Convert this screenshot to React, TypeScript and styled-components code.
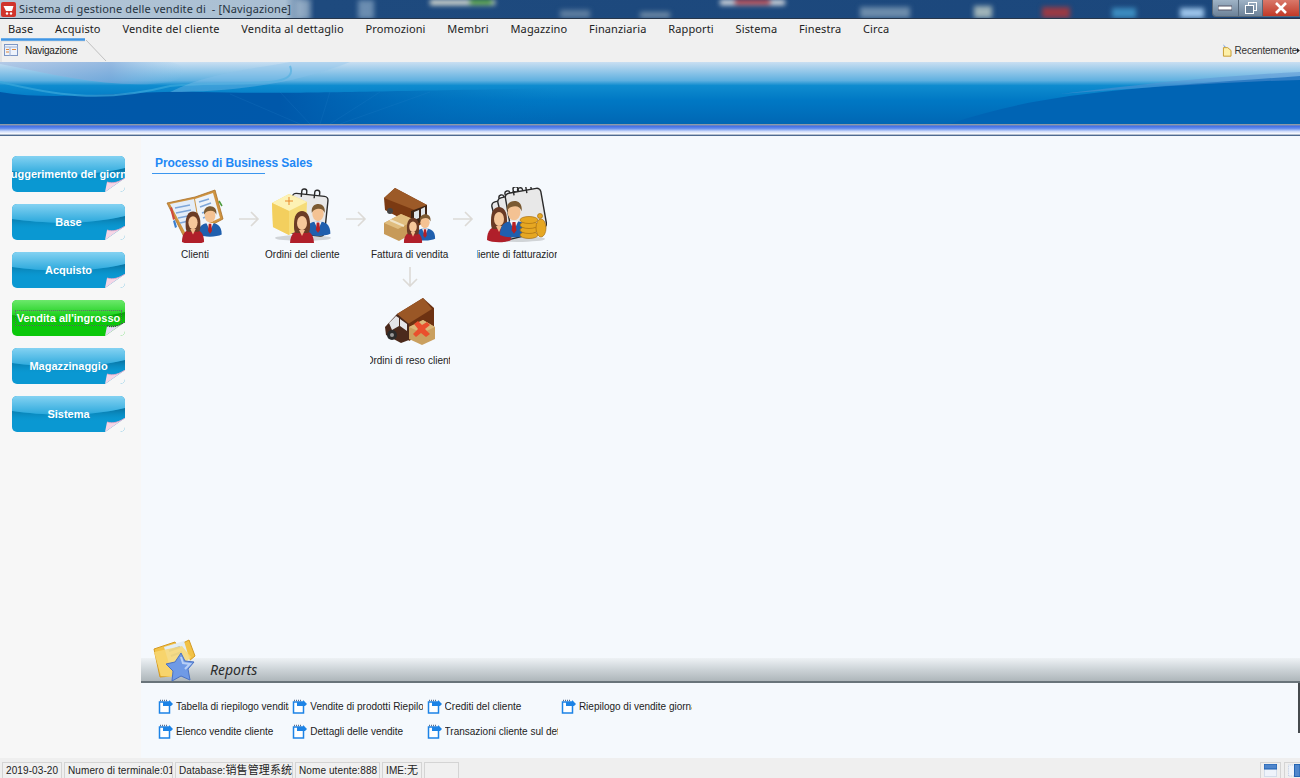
import React from "react";
import styled, { createGlobalStyle } from "styled-components";

const UI = `"Noto Sans", "Noto Sans CJK SC", sans-serif`;
const SMALL = `"Liberation Sans", "Noto Sans CJK SC", sans-serif`;

const Global = createGlobalStyle`
  html, body { margin: 0; padding: 0; height: 100%; overflow: hidden; background: #f5f9fd; }
  #root { height: 100%; }
  * { box-sizing: border-box; }
`;

const Page = styled.div`
  width: 1300px; height: 778px; display: flex; flex-direction: column; overflow: hidden;
  font-family: ${UI}; color: #222; position: relative;
`;

const TitleBar = styled.div`
  height: 19px; flex: none; position: relative; display: flex; align-items: center; gap: 3px;
  padding-left: 1px; overflow: hidden; background: linear-gradient(90deg,#b4c6d6 0,#a9bfd3 285px,#1e4a7e 315px,#1b477c 100%);
  border-bottom: 1px solid #27364a;
`;
const DesktopBlobs = styled.svg`
  position: absolute; left: 0; top: 0; filter: blur(2.500px);
`;
const TitleText = styled.span`
  position: relative; font-size: 11px; line-height: 18px; color: #26333f; white-space: pre; letter-spacing: .13px;
`;
const WinControls = styled.div`
  position: absolute; right: 0; top: 0; height: 17px; width: 88px; display: flex;
  border: 1px solid #5a6a7a; border-top: none; border-right: none; border-radius: 0 0 0 4px; overflow: hidden;
`;
const WinBtn = styled.div<{ $red?: boolean; $w: number }>`
  width: ${p => p.$w}px; display: flex; align-items: center; justify-content: center;
  background: ${p => p.$red ? "linear-gradient(#d9786a,#c03a28)" : "linear-gradient(#9fb3c6,#6d8298)"};
  border-right: 1px solid #55677a;
`;

const MenuBar = styled.nav`
  height: 19px; flex: none; display: flex; gap: 21.800px; padding-left: 8px; background: #f0f0f0; align-items: center;
`;
const MenuItem = styled.span`
  font-size: 11px; line-height: 19px; color: #222; white-space: nowrap; letter-spacing: .12px;
`;

const TabRow = styled.div`
  height: 24px; flex: none; background: #f0f0f0; display: flex; justify-content: space-between; position: relative;
`;
const Tab = styled.div`
  width: 106px; height: 24px; display: flex; align-items: center; gap: 7px; padding: 0 0 0 4px;
  position: relative; font-family: ${SMALL}; font-size: 10px; letter-spacing: -.25px; color: #222;
`;
const TabOutline = styled.svg`
  position: absolute; left: 0; top: 0;
`;
const Recent = styled.div`
  display: flex; align-items: center; gap: 2px; padding: 0; width: 78px; font-family: ${SMALL}; font-size: 10px; letter-spacing: -.2px; color: #333; white-space: nowrap;
`;

const Banner = styled.svg`
  display: block; flex: none; width: 1300px; height: 62px;
`;
const Strip = styled.div`
  height: 12px; flex: none;
  background: linear-gradient(#8e9aa8 0,#8e9aa8 8%,#3f6de6 16%,#5f8aec 36%,#cfdcfa 62%,#ffffff 84%,#4e6a90 92%,#4e6a90 100%);
`;

const Body = styled.div`
  flex: 1; min-height: 0; display: flex;
`;
const Sidebar = styled.aside`
  width: 141px; flex: none; background: #f7f7f7; padding: 20px 0 0 12px; display: flex; flex-direction: column; gap: 12px;
`;
const SideButton = styled.div<{ $green?: boolean }>`
  width: 113px; height: 36px; position: relative; border-radius: 5px; overflow: hidden;
  display: flex; align-items: center; justify-content: center;
  background: ${p => p.$green ? "#0bc80b" : "#0a98d2"};
`;
const Gloss = styled.svg`
  position: absolute; left: 0; top: 0;
`;
const SideLabel = styled.span<{ $dotted?: boolean }>`
  position: relative; font-size: 11px; font-weight: 700; color: #fff; white-space: nowrap; line-height: 14px;
  font-family: ${SMALL};
  ${p => p.$dotted ? "outline: 1px dotted rgba(120,60,130,.7); padding: 0 1px;" : ""}
`;
const Fold = styled.svg`
  position: absolute; right: 0; bottom: 0;
`;

const Content = styled.main`
  flex: 1; min-width: 0; background: #f5f9fd; display: flex; flex-direction: column;
`;
const Process = styled.section`
  flex: 1; padding: 20px 0 0 11px;
`;
const ProcessTitle = styled.h2`
  margin: 0; width: 113px; height: 18px; border-bottom: 1px solid #3a96ef; padding-left: 3px;
  font-size: 12px; line-height: 14px; font-weight: 700; color: #1e88f5; white-space: nowrap; letter-spacing: -.08px;
  font-family: ${SMALL};
`;
const Flow = styled.div`
  display: grid; grid-template-columns: 80px 27.300px 80px 27.300px 80px 27.300px 80px; grid-template-rows: 76px 30px 78px;
  margin: 12px 0 0 3px; justify-items: center;
`;
const Node = styled.div<{ $col: number; $row: number }>`
  grid-column: ${p => p.$col}; grid-row: ${p => p.$row}; width: 80px; display: flex; flex-direction: column; align-items: center;
`;
const NodeIcon = styled.div`
  height: 58px; display: flex; align-items: center; justify-content: center;
`;
const NodeLabel = styled.div`
  width: 80px; margin-top: 4px; display: flex; justify-content: center; overflow: hidden; white-space: nowrap;
  font-family: ${SMALL}; font-size: 10px; line-height: 14px; color: #222;
`;
const FlowArrow = styled.svg<{ $col: number; $row: number }>`
  grid-column: ${p => p.$col}; grid-row: ${p => p.$row}; align-self: ${p => p.$row === 1 ? "start" : "center"};
  margin-top: ${p => p.$row === 1 ? "25px" : "0"}; overflow: visible;
`;

const Reports = styled.section`
  flex: none; position: relative;
`;
const ReportsHeader = styled.div`
  height: 25px; display: flex; align-items: center; padding: 0 0 2px 69px;
  background: linear-gradient(#eef2f5,#cdd4d8 45%,#aeb6ba 92%,#69747a 92%);
  font-family: ${UI}; font-size: 14px; font-style: italic; color: #2c2c2c;
`;
const FolderIcon = styled.svg`
  position: absolute; left: 12px; top: -19px;
`;
const ReportsGrid = styled.div`
  height: 75px; display: grid; grid-template-columns: repeat(4, 134.300px); grid-auto-rows: 25px; padding: 11px 0 0 17px;
  position: relative;
`;
const RightEdge = styled.div`
  position: absolute; right: 0; top: 0; width: 2px; height: 50px; background: #454a4e;
`;
const ReportLink = styled.div`
  display: flex; align-items: center; gap: 3px; font-family: ${SMALL}; font-size: 10px; color: #222; white-space: nowrap; min-width: 0;
`;
const ReportText = styled.span`
  width: 113px; overflow: hidden; display: block;
`;

const StatusBar = styled.footer`
  height: 20px; flex: none; background: #efefef; display: flex; align-items: flex-end; gap: 2px; padding-left: 2px; position: relative;
`;
const StatusCell = styled.div<{ $w: number }>`
  width: ${p => p.$w}px; height: 16px; border: 1px solid #d4d4d4; border-bottom: none; font-family: ${SMALL}; font-size: 10px; line-height: 15px; color: #222;
  padding-left: 3px; white-space: nowrap; overflow: hidden; background: #f0f0f0; letter-spacing: .1px;
`;
const Cjk = styled.span`
  font-size: 11px;
`;
const StatusIcons = styled.div`
  margin-left: auto; display: flex; gap: 3px; height: 16px;
`;
const LayoutBtn = styled.div`
  width: 21px; height: 16px; border: 1px solid #d4d4d4; border-bottom: none; display: flex; align-items: center; justify-content: center; flex: none;
`;
const LayoutBtnCut = styled(LayoutBtn)`
  width: 16px; border-right: none; justify-content: flex-start; padding-left: 3px;
`;

const Woman = ({ x, y, s = 1 }: { x: number; y: number; s?: number }) => (
  <g transform={`translate(${x} ${y}) scale(${s})`}>
    <path d="M-12 26c0-10 5-14 12-14s12 4 12 14c-5 3-19 3-24 0z" fill="#b01f2a" />
    <path d="M-8 6c0-8 3-13 8-13s8 5 8 13c0 5 0 8-2 9H-6c-2-1-2-4-2-9z" fill="#6b3b25" />
    <ellipse cx="0" cy="5" rx="5" ry="7" fill="#f6c79a" />
    <path d="M-3 12h6l-3 6z" fill="#f2bb8c" />
  </g>
);
const Man = ({ x, y, s = 1 }: { x: number; y: number; s?: number }) => (
  <g transform={`translate(${x} ${y}) scale(${s})`}>
    <path d="M-13 24c0-10 5-13 13-13s13 3 13 13c-6 3-20 3-26 0z" fill="#1f5fae" />
    <path d="M-4 11h8l-4 9z" fill="#f4f4f4" />
    <path d="M-1.400 12h2.800l.8 8-2.200 3-2.200-3z" fill="#b52025" />
    <ellipse cx="0" cy="3" rx="6" ry="7.500" fill="#f4c293" />
    <path d="M-6.500 2c-1-7 3-9.500 7-9.500s7.500 3 6.500 9.500c-1-3-3-4.500-6-4.500s-6 1-7.500 4.500z" fill="#7b5a32" />
  </g>
);
const Shadow = ({ cx, cy, rx }: { cx: number; cy: number; rx: number }) => (
  <ellipse cx={cx} cy={cy} rx={rx} ry="3" fill="#000" opacity=".15" />
);
const Calendar = ({ x, y, r = 8 }: { x: number; y: number; r?: number }) => (
  <g transform={`translate(${x} ${y}) rotate(${r})`}>
    <rect x="0" y="4" width="36" height="40" rx="4" fill="#e8e8e8" stroke="#2a2a2a" strokeWidth="1.400" />
    <path d="M9 7V1c0-3 5-3 5 0v3M22 7V1c0-3 5-3 5 0v3" fill="none" stroke="#2a2a2a" strokeWidth="1.400" />
  </g>
);

const IconClienti = () => (
  <svg width="58" height="56" viewBox="0 0 58 56">
    <path d="M1 16L29 10 49 3l8 29-38 20z" fill="#cf9440" stroke="#a9702a" strokeWidth=".8" />
    <path d="M4 17L28 12l5 28-13 7z" fill="#e4edf8" />
    <path d="M29 12L47 6l7 25-20 9z" fill="#eef3f9" />
    <path d="M9 21l15-3M10 26l15-3M12 31l15-3M14 36l13-3" stroke="#7ea6d8" strokeWidth="1.500" />
    <path d="M33 15l10-3M34 20l11-4M36 26l11-4M37 31l11-4" stroke="#7ea6d8" strokeWidth="1.500" />
    <path d="M6 20l-2 1 3 12 2-1z" fill="#cf4a3c" /><path d="M9 33l-2 1 2 7 2-1z" fill="#3a7fd0" />
    <path d="M53 14l3 5" stroke="#4a9a3a" strokeWidth="1.500" />
    <Man x={44} y={26} s={.9} />
    <Woman x={27} y={31} s={.92} />
  </svg>
);
const IconOrdini = () => (
  <svg width="62" height="56" viewBox="0 0 62 56">
    <Shadow cx={32} cy={51} rx={28} />
    <Calendar x={22} y={2} r={6} />
    <path d="M1 16L18 7l18 8-1 24-17 9-16-8z" fill="#f6dc78" />
    <path d="M1 16l17 8 18-9-18-8z" fill="#fdf2b4" />
    <path d="M18 24v24L2 40 1 16z" fill="#f3cf5e" />
    <path d="M14 14h8M18 10v8" stroke="#e8892a" strokeWidth="1" />
    <Man x={47} y={24} s={.95} />
    <Woman x={31} y={31} s={1} />
  </svg>
);
const IconFattura = () => (
  <svg width="54" height="56" viewBox="0 0 54 56">
    <path d="M1 11L12 1l32 17v15l-10 7L2 23z" fill="#7b3a12" />
    <path d="M1 11L12 1l32 17-10 6z" fill="#9c5a28" />
    <path d="M28 24l16-6v14l-16 8z" fill="#3d2415" />
    <path d="M31 25l5-2v8l-5 2zM38 22l4-2v8l-4 2z" fill="#dfe5ea" />
    <circle cx="7" cy="24" r="3" fill="#444" />
    <path d="M1 36l17-9 14 6v12l-16 9-15-7z" fill="#c79a58" />
    <path d="M1 36l17-9 14 6-17 9z" fill="#e0bd7e" />
    <path d="M7 33l14 6" stroke="#f0e4c8" strokeWidth="2" />
    <Man x={42} y={33} s={.78} />
    <Woman x={30} y={36} s={.76} />
  </svg>
);
const IconFatturazione = () => (
  <svg width="60" height="56" viewBox="0 0 60 56">
    <Calendar x={3} y={12} r={-14} />
    <Calendar x={9} y={8} r={-14} />
    <Calendar x={17} y={3} r={-10} />
    <Shadow cx={30} cy={52} rx={28} />
    <Woman x={12} y={27} s={1} />
    <Man x={27} y={22} s={1.080} />
    <g fill="#e6a722" stroke="#a86f10" strokeWidth=".7">
      <ellipse cx="42" cy="48" rx="9" ry="3.500" />
      <ellipse cx="42" cy="43" rx="9" ry="3.500" />
      <ellipse cx="42" cy="38" rx="9" ry="3.500" />
      <ellipse cx="42" cy="33" rx="9" ry="3.500" />
      <ellipse cx="54" cy="41" rx="5" ry="9" />
      <circle cx="53" cy="29" r="2.500" />
    </g>
  </svg>
);
const IconReso = () => (
  <svg width="50" height="48" viewBox="0 0 50 48">
    <path d="M12 17L38 1l11 10v19L24 44z" fill="#6d3212" />
    <path d="M12 17L38 1l9 11-24 15z" fill="#9a5726" />
    <path d="M0 30l12-13 12 10v16l-8 3-15-8z" fill="#4b2a1c" />
    <path d="M4 26l7-7 3 2v8l-7 4zM15 22l7 5v7l-7-5z" fill="#e5e5e8" />
    <circle cx="7" cy="38" r="5" fill="#2b2b2b" /><circle cx="7" cy="38" r="2" fill="#999" />
    <path d="M24 30l14-7 12 7v12l-13 6-13-6z" fill="#caa05f" />
    <path d="M24 30l14-7 12 7-13 6z" fill="#dcb87a" />
    <path d="M29 27l4-3 4 4 5-3 3 3-5 4 5 5-4 3-5-4-5 4-3-3 5-5z" fill="#ea4f2d" />
  </svg>
);

const FlowIconsArrow = ({ col, row, down }: { col: number; row: number; down?: boolean }) => down ? (
  <FlowArrow $col={col} $row={row} width="16" height="20" viewBox="0 0 16 20">
    <path d="M8 0v19M1 12l7 7 7-7" fill="none" stroke="#dcdad6" strokeWidth="1.600" />
  </FlowArrow>
) : (
  <FlowArrow $col={col} $row={row} width="20" height="16" viewBox="0 0 20 16">
    <path d="M0 8h19M12 1l7 7-7 7" fill="none" stroke="#dcdad6" strokeWidth="1.600" />
  </FlowArrow>
);

const DocIcon = () => (
  <svg width="15" height="15" viewBox="0 0 15 15" style={{ flex: "none" }}>
    <path d="M1.500 3h10v11h-10z" fill="#fff" stroke="#1c83e6" strokeWidth="1.500" />
    <path d="M5 7V3h6V1l4 4-2 2z" fill="#1c83e6" />
    <path d="M2 1.500h7" stroke="#5a6f90" strokeWidth="1.300" strokeDasharray="1 1" />
  </svg>
);

const Folder = () => (
  <FolderIcon width="48" height="46" viewBox="0 0 48 46">
    <path d="M1 10L22 3l2 4 12-6 6 16-24 20-11 1z" fill="#f2c246" stroke="#d49a22" strokeWidth="1" />
    <path d="M11 8l20-6 6 20-20 6z" fill="#e2edf4" />
    <path d="M16 12l11-4M18 17l11-4" stroke="#9db8d6" strokeWidth="2" />
    <path d="M1 13l28-6 9 11-20 20-10-1z" fill="#f8d773" opacity=".85" />
    <path d="M28 14l4 8 9 1-6 7 2 11-9-4-9 5 1-10-7-7 9-2z" fill="#6f9ae6" stroke="#4a72c4" strokeWidth="1" strokeLinejoin="round" />
    <path d="M28 18l2 6 7 1-5 5" fill="none" stroke="#b9d0f6" strokeWidth="2" />
  </FolderIcon>
);

const menu = ["Base", "Acquisto", "Vendite del cliente", "Vendita al dettaglio", "Promozioni", "Membri", "Magazzino", "Finanziaria", "Rapporti", "Sistema", "Finestra", "Circa"];
const side = [
  { t: "Suggerimento del giorno" },
  { t: "Base" },
  { t: "Acquisto" },
  { t: "Vendita all'ingrosso", green: true },
  { t: "Magazzinaggio" },
  { t: "Sistema" },
];
const reports = [
  ["Tabella di riepilogo vendita", "Vendite di prodotti Riepilogo", "Crediti del cliente", "Riepilogo di vendite giornaliere"],
  ["Elenco vendite cliente", "Dettagli delle vendite", "Transazioni cliente sul dettaglio"],
];
const status: [React.ReactNode, number][] = [
  ["2019-03-20", 60],
  ["Numero di terminale:01", 109],
  [<>Database:<Cjk>销售管理系统</Cjk></>, 118],
  ["Nome utente:888", 85],
  [<>IME:<Cjk>无</Cjk></>, 40],
  ["", 35],
];

export default function App() {
  return (
    <Page>
      <Global />
      <TitleBar>
        <DesktopBlobs width="1300" height="19">
          <rect x="296" y="0" width="14" height="19" fill="#c4d4e2" opacity=".5" />
          <rect x="358" y="0" width="16" height="19" fill="#b8cfe4" opacity=".5" />
          <rect x="430" y="0" width="65" height="5" fill="#e8e8d8" /><rect x="470" y="0" width="22" height="4" fill="#57b02f" />
          <rect x="720" y="0" width="65" height="5" fill="#e8e8e8" /><rect x="735" y="0" width="35" height="4" fill="#d43c3c" />
          <rect x="860" y="7" width="50" height="11" fill="#6d8cab" />
          <rect x="974" y="6" width="18" height="12" fill="#9fb3b8" />
          <rect x="1042" y="7" width="28" height="11" fill="#9a3a44" />
          <rect x="1112" y="8" width="24" height="10" fill="#3c8cc0" />
          <rect x="1180" y="8" width="24" height="10" fill="#9cc4ea" />
          <rect x="560" y="10" width="30" height="8" fill="#5f7ea0" />
          <rect x="640" y="12" width="30" height="6" fill="#6f8aa6" />
        </DesktopBlobs>
        <svg width="15" height="15" viewBox="0 0 15 15" style={{ position: "relative", flex: "none" }}>
          <rect width="15" height="15" rx="2" fill="#d0342c" />
          <path d="M2.500 4h10l-1.500 5H5z" fill="#fff" />
          <circle cx="6" cy="11.500" r="1.200" fill="#fff" /><circle cx="10" cy="11.500" r="1.200" fill="#fff" />
        </svg>
        <TitleText>{"Sistema di gestione delle vendite di  - [Navigazione]"}</TitleText>
        <WinControls>
          <WinBtn $w={26}><svg width="14" height="6"><rect y="1" width="14" height="4" fill="#fff" stroke="#556" /></svg></WinBtn>
          <WinBtn $w={25}><svg width="12" height="12" viewBox="0 0 12 12"><rect x="3.500" y=".5" width="8" height="8" fill="none" stroke="#fff" /><rect x=".5" y="3.500" width="8" height="8" fill="#6d8298" stroke="#fff" /></svg></WinBtn>
          <WinBtn $w={37} $red><svg width="12" height="12" viewBox="0 0 12 12"><path d="M1 1l10 10M11 1L1 11" stroke="#fff" strokeWidth="2.600" /></svg></WinBtn>
        </WinControls>
      </TitleBar>

      <MenuBar>{menu.map(m => <MenuItem key={m}>{m}</MenuItem>)}</MenuBar>

      <TabRow>
        <Tab>
          <TabOutline width="107" height="24" viewBox="0 0 107 24">
            <path d="M1 24V3h84" fill="none" stroke="#d8d8d8" />
            <path d="M86 2l20 21" fill="none" stroke="#c0c0c0" />
            <path d="M1 1.500h84" stroke="#3f96e6" strokeWidth="2.500" />
          </TabOutline>
          <svg width="14" height="12" viewBox="0 0 14 12" style={{ position: "relative" }}>
            <rect x=".5" y=".5" width="13" height="11" fill="#eef3fb" stroke="#7d96c4" />
            <path d="M0 3h14" stroke="#9db2d8" /><path d="M6 3v9" stroke="#9db2d8" />
            <path d="M2 5.500h3M2 8h3M8 5.500h4" stroke="#e0873a" />
          </svg>
          <span>Navigazione</span>
        </Tab>
        <Recent>
          <svg width="10" height="14" viewBox="0 0 10 14" style={{ marginRight: 1 }}>
            <path d="M2.500 4L1 1l3 2.500z" fill="#7fa5dc" />
            <path d="M1.500 4.500h4.500l3.500 3v6h-8z" fill="#fdf0a8" stroke="#c69a2e" />
          </svg>
          <span>Recentemente</span>
          <svg width="3" height="5" viewBox="0 0 3 5" style={{ marginLeft: -2 }}><path d="M0 0l3 2.500L0 5z" fill="#222" /></svg>
        </Recent>
      </TabRow>

      <Banner viewBox="0 0 1300 62" preserveAspectRatio="none">
        <defs>
          <linearGradient id="bannerBg" x1="0" y1="0" x2="0" y2="1">
            <stop offset="0" stopColor="#c9dff2" />
            <stop offset=".3" stopColor="#5fb0e0" />
            <stop offset=".38" stopColor="#0f8ccf" />
            <stop offset=".62" stopColor="#0078c4" />
            <stop offset="1" stopColor="#0067b4" />
          </linearGradient>
          <linearGradient id="leftFade" x1="0" y1="0" x2="1" y2="0">
            <stop offset="0" stopColor="#0058a8" />
            <stop offset=".5" stopColor="#0058aa" />
            <stop offset="1" stopColor="#0074c0" stopOpacity="0" />
          </linearGradient>
          <linearGradient id="swoosh" x1="0" y1="0" x2="1" y2="0">
            <stop offset="0" stopColor="#a9bfe0" />
            <stop offset=".6" stopColor="#7da6d8" />
            <stop offset="1" stopColor="#8cc4ea" stopOpacity="0" />
          </linearGradient>
        </defs>
        <rect width="1300" height="62" fill="url(#bannerBg)" />
        <path d="M0 30C60 40 120 28 200 30S340 30 560 26V62H0z" fill="url(#leftFade)" />
        <path d="M0 2C60 14 120 28 170 20 190 14 190 4 170 0H0z" fill="url(#swoosh)" opacity=".65" />
        <path d="M0 20C50 32 100 42 170 24 240 18 300 28 290 4" fill="none" stroke="#3aa8dc" strokeWidth="2" opacity=".7" />
        <path d="M170 30C210 10 260 6 290 0h60C300 20 240 30 170 30z" fill="#8cc4ea" opacity=".35" />
        <path d="M950 62C1040 30 1140 26 1300 14V62z" fill="#0064b4" />
        <path d="M1060 32C1140 22 1220 14 1300 10v8C1220 20 1140 26 1060 32z" fill="#5c94d4" opacity=".5" />
        <g stroke="#2a86cc" strokeWidth=".6" opacity=".3">
          <path d="M300 62l-70-30M310 62l-30-32M320 62l10-32M330 62l50-32M340 62l90-32" />
        </g>
      </Banner>
      <Strip />

      <Body>
        <Sidebar>
          {side.map((s, i) => (
            <SideButton key={s.t} $green={s.green}>
              <Gloss width="113" height="36" viewBox="0 0 113 36">
                <defs>
                  <linearGradient id={`gloss${i}`} x1="0" y1="0" x2="0" y2="1">
                    <stop offset="0" stopColor={s.green ? "#6ce86c" : "#84d2f2"} />
                    <stop offset="1" stopColor={s.green ? "#10cc10" : "#2aa8dc"} />
                  </linearGradient>
                  <linearGradient id={`shade${i}`} x1="0" y1="0" x2="0" y2="1">
                    <stop offset="0" stopColor={s.green ? "#089a08" : "#0a6f9c"} />
                    <stop offset="1" stopColor={s.green ? "#0bc80b" : "#0a98d2"} stopOpacity="0" />
                  </linearGradient>
                </defs>
                <path d="M0 15C30 19 70 22 113 12V26H0z" fill={`url(#shade${i})`} />
                <path d="M0 0H113V12C70 22 30 19 0 15z" fill={`url(#gloss${i})`} />
              </Gloss>
              <SideLabel $dotted={s.green}>{s.t}</SideLabel>
              <Fold width="20" height="14" viewBox="0 0 20 14">
                <path d="M0 14L20 0v14z" fill="#f7f7f7" />
                <path d="M0 14L2 4C8 6 14 4 20 0z" fill={s.green ? "#e6dcf4" : "#f6d6e6"} />
                <path d="M2 4C8 6 14 4 20 0" fill="none" stroke={s.green ? "#111" : "#f0a8c8"} strokeWidth=".8" strokeDasharray={s.green ? "1 1" : undefined} />
              </Fold>
            </SideButton>
          ))}
        </Sidebar>

        <Content>
          <Process>
            <ProcessTitle>Processo di Business Sales</ProcessTitle>
            <Flow>
              <Node $col={1} $row={1}><NodeIcon><IconClienti /></NodeIcon><NodeLabel>Clienti</NodeLabel></Node>
              <FlowIconsArrow col={2} row={1} />
              <Node $col={3} $row={1}><NodeIcon><IconOrdini /></NodeIcon><NodeLabel>Ordini del cliente</NodeLabel></Node>
              <FlowIconsArrow col={4} row={1} />
              <Node $col={5} $row={1}><NodeIcon><IconFattura /></NodeIcon><NodeLabel>Fattura di vendita</NodeLabel></Node>
              <FlowIconsArrow col={6} row={1} />
              <Node $col={7} $row={1}><NodeIcon><IconFatturazione /></NodeIcon><NodeLabel>Cliente di fatturazione</NodeLabel></Node>
              <FlowIconsArrow col={5} row={2} down />
              <Node $col={5} $row={3}><NodeIcon><IconReso /></NodeIcon><NodeLabel>Ordini di reso clienti</NodeLabel></Node>
            </Flow>
          </Process>

          <Reports>
            <Folder />
            <ReportsHeader>Reports</ReportsHeader>
            <ReportsGrid>
              <RightEdge />
              {reports.flat().map(r => (
                <ReportLink key={r}><DocIcon /><ReportText>{r}</ReportText></ReportLink>
              ))}
            </ReportsGrid>
          </Reports>
        </Content>
      </Body>

      <StatusBar>
        {status.map(([t, w], i) => <StatusCell key={i} $w={w}>{t}</StatusCell>)}
        <StatusIcons>
          <LayoutBtn>
            <svg width="13" height="13" viewBox="0 0 13 13">
              <rect x=".5" y=".5" width="12" height="12" fill="#eef3fb" stroke="#b8c8e0" strokeDasharray="1 1" />
              <rect x="0" y="0" width="13" height="5" fill="#4f86cc" stroke="#1d5fb0" />
            </svg>
          </LayoutBtn>
          <LayoutBtnCut>
            <svg width="13" height="13" viewBox="0 0 13 13">
              <rect x=".5" y=".5" width="12" height="12" fill="#eef3fb" stroke="#b8c8e0" strokeDasharray="1 1" />
              <rect x="7" y="0" width="6" height="13" fill="#4f86cc" stroke="#1d5fb0" />
            </svg>
          </LayoutBtnCut>
        </StatusIcons>
      </StatusBar>
    </Page>
  );
}
